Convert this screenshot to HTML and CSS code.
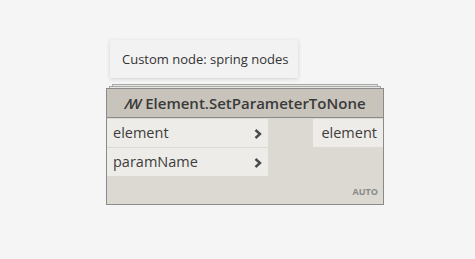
FILE: index.html
```html
<!DOCTYPE html>
<html lang="en">
<head>
  <meta charset="UTF-8">
  <title>Element.SetParameterToNone</title>
  <link rel="stylesheet" href="styles.css">
</head>
<body>
  <div class="canvas">
    <div class="tooltip">Custom node: spring nodes</div>

    <div class="node-wrap">
      <div class="stack stack-back"></div>
      <div class="stack stack-mid"></div>
      <div class="node">
        <div class="node-header"><span class="lacing">/W</span> Element.SetParameterToNone</div>
        <div class="node-body">
          <div class="inputs">
            <div class="port in">
              <span>element</span>
              <svg class="chev" width="8" height="10" viewBox="0 0 8 10"><path d="M1.5 1 L6 5 L1.5 9" fill="none" stroke="#4a4a4a" stroke-width="2.4"/></svg>
            </div>
            <div class="port in">
              <span>paramName</span>
              <svg class="chev" width="8" height="10" viewBox="0 0 8 10"><path d="M1.5 1 L6 5 L1.5 9" fill="none" stroke="#4a4a4a" stroke-width="2.4"/></svg>
            </div>
          </div>
          <div class="outputs">
            <div class="port out">element</div>
          </div>
        </div>
        <div class="node-footer">AUTO</div>
      </div>
    </div>
  </div>
</body>
</html>
```

FILE: styles.css
```css
* {
  box-sizing: border-box;
  margin: 0;
  padding: 0;
}

body {
  background: #f5f5f5;
  font-family: 'Open Sans', 'DejaVu Sans', sans-serif;
  color: #333;
}

.canvas {
  width: 475px;
  height: 259px;
  padding: 40px 0 0 110px;
}

.tooltip {
  width: 188px;
  height: 38px;
  background: #f2f2f2;
  box-shadow: 0 1px 4px rgba(0, 0, 0, 0.15);
  font-size: 13px;
  color: #333;
  padding: 10px 0 0 12px;
}

.node-wrap {
  position: relative;
  margin: 7px 0 0 -4px;
  padding-top: 3px;
  width: 278px;
}

.stack {
  position: absolute;
  height: 20px;
  background: #e8e6e2;
  border: 1px solid #a8a8a8;
}

.stack-back {
  top: -1px;
  left: 6px;
  right: 6px;
}

.stack-mid {
  top: 1px;
  left: 3px;
  right: 3px;
}

.node {
  position: relative;
  background: #dcd9d3;
  border: 1px solid #8a8a8a;
}

.node-header {
  height: 29px;
  background: #c8c4bb;
  border-bottom: 1px solid #8a8a8a;
  text-align: center;
  font-size: 15px;
  font-weight: 600;
  color: #3a3a3a;
  line-height: 28px;
}

.lacing {
  font-style: italic;
  letter-spacing: -2px;
  margin-right: 2px;
}

.node-body {
  display: flex;
  justify-content: space-between;
  padding-top: 1px;
}

.inputs {
  width: 161px;
  display: flex;
  flex-direction: column;
  gap: 1px;
}

.port {
  height: 28px;
  background: #eeece8;
  font-size: 14.5px;
  color: #3c3c3c;
  line-height: 28px;
}

.port.in {
  display: flex;
  justify-content: space-between;
  align-items: center;
  padding: 0 6px 0 6px;
}

.chev {
  margin-top: 1px;
}

.port.out {
  width: 70px;
  text-align: right;
  padding-right: 6px;
}

.node-footer {
  text-align: right;
  font-size: 9px;
  font-weight: 700;
  color: #8a8a8a;
  padding: 9px 5px 6px 0;
}
```
